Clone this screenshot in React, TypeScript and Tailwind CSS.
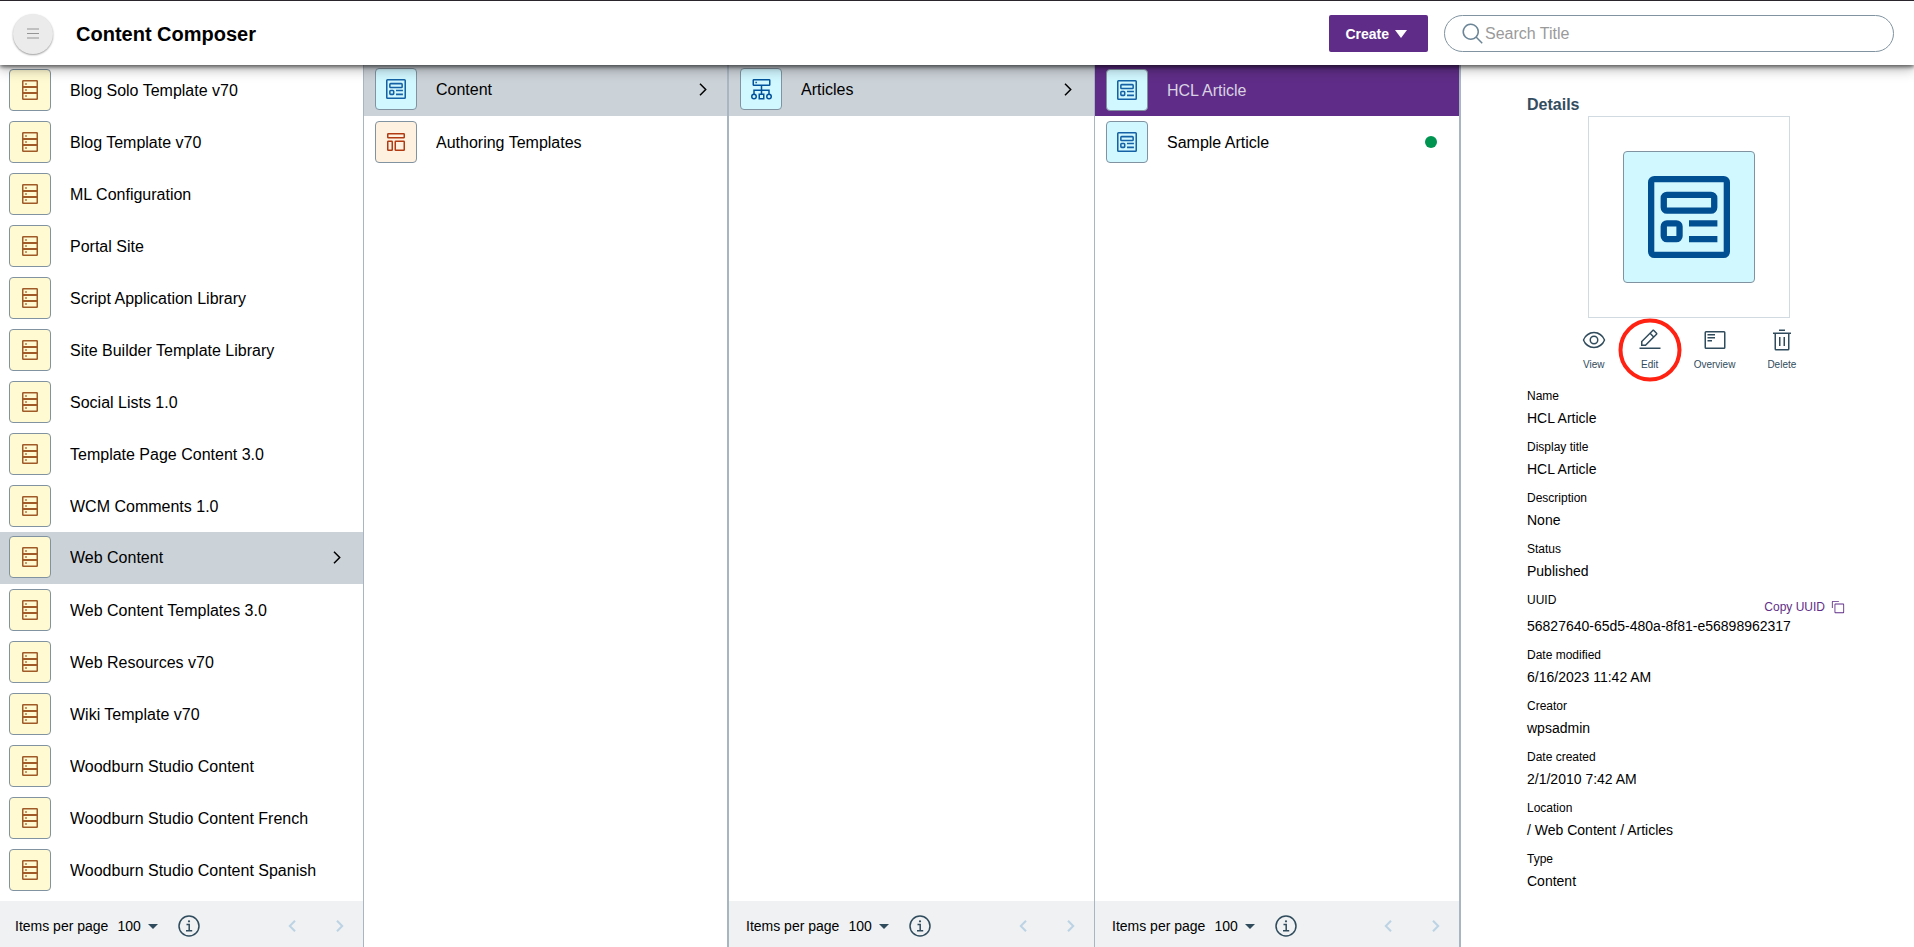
import React from "react";

type Kind = "library" | "content" | "template" | "sitearea";

type Item = {
  title: string;
  kind: Kind;
  state?: "open" | "active";
  published?: boolean;
};

const libraries: Item[] = [
  { title: "Blog Solo Template v70", kind: "library" },
  { title: "Blog Template v70", kind: "library" },
  { title: "ML Configuration", kind: "library" },
  { title: "Portal Site", kind: "library" },
  { title: "Script Application Library", kind: "library" },
  { title: "Site Builder Template Library", kind: "library" },
  { title: "Social Lists 1.0", kind: "library" },
  { title: "Template Page Content 3.0", kind: "library" },
  { title: "WCM Comments 1.0", kind: "library" },
  { title: "Web Content", kind: "library", state: "open" },
  { title: "Web Content Templates 3.0", kind: "library" },
  { title: "Web Resources v70", kind: "library" },
  { title: "Wiki Template v70", kind: "library" },
  { title: "Woodburn Studio Content", kind: "library" },
  { title: "Woodburn Studio Content French", kind: "library" },
  { title: "Woodburn Studio Content Spanish", kind: "library" },
];

const folders: Item[] = [
  { title: "Content", kind: "content", state: "open" },
  { title: "Authoring Templates", kind: "template" },
];

const siteAreas: Item[] = [{ title: "Articles", kind: "sitearea", state: "open" }];

const articles: Item[] = [
  { title: "HCL Article", kind: "content", state: "active" },
  { title: "Sample Article", kind: "content", published: true },
];

function LibraryIcon() {
  return (
    <svg width="16" height="20" viewBox="0 0 16 20" fill="none" stroke="currentColor" strokeWidth="1.5" aria-hidden="true">
      <rect x="0.75" y="0.75" width="14.5" height="18.5" rx="0.6" />
      <path d="M1 7H15M1 13H15" strokeWidth="2" />
      <path d="M3.2 4H4.8M3.2 10H4.8M3.2 16H4.8" />
    </svg>
  );
}

function ContentIcon({ className }: { className: string }) {
  return (
    <svg className={className} viewBox="0 0 26 26" fill="none" stroke="currentColor" strokeWidth="2" aria-hidden="true">
      <rect x="1" y="1" width="24" height="24" rx="1" />
      <rect x="5" y="6" width="16" height="5" rx="1" />
      <rect x="5" y="15" width="5" height="5" rx="1" />
      <path d="M13 15H22M13 20H22" />
    </svg>
  );
}

function TemplateIcon() {
  return (
    <svg width="18" height="18" viewBox="0 0 18 18" fill="none" stroke="currentColor" strokeWidth="1.5" aria-hidden="true">
      <rect x="0.75" y="0.75" width="16.5" height="4" rx="0.6" />
      <rect x="0.75" y="8.25" width="4.5" height="9" rx="0.6" />
      <rect x="8.25" y="8.25" width="9" height="9" rx="0.6" />
    </svg>
  );
}

function SiteAreaIcon() {
  return (
    <svg width="21" height="21" viewBox="0 0 21 21" fill="none" stroke="currentColor" strokeWidth="1.5" aria-hidden="true">
      <rect x="2.25" y="0.75" width="16.5" height="5.5" rx="0.6" />
      <path d="M4.4 3.5H5.9M10.5 6.5V15M3 15V11.2H18V15" />
      <circle cx="3" cy="17.5" r="2.25" />
      <circle cx="18" cy="17.5" r="2.25" />
      <rect x="8.25" y="15.25" width="4.5" height="4.5" />
    </svg>
  );
}

const tileColors: Record<Kind, string> = {
  library: "bg-[#fffad1] text-[#9f5a28]",
  content: "bg-[#d1f7ff] text-[#1462a5]",
  template: "bg-[#fff1df] text-[#b23a12]",
  sitearea: "bg-[#d1f7ff] text-[#00539b]",
};

function Tile({ kind }: { kind: Kind }) {
  return (
    <span className={`flex size-[42px] shrink-0 items-center justify-center rounded border border-[#8193a1] ${tileColors[kind]}`}>
      {kind === "library" && <LibraryIcon />}
      {kind === "content" && <ContentIcon className="size-5" />}
      {kind === "template" && <TemplateIcon />}
      {kind === "sitearea" && <SiteAreaIcon />}
    </span>
  );
}

function Row({ item, inset }: { item: Item; inset: string }) {
  const tone =
    item.state === "open"
      ? "bg-[#cbd2d8] pb-0.5 text-black"
      : item.state === "active"
        ? "bg-[#5f2d87] text-[#d9d3e3]"
        : "bg-white text-black";
  return (
    <li>
      <button type="button" className={`flex h-[52px] w-full items-center gap-[19px] text-left text-base ${inset} ${tone}`}>
        <Tile kind={item.kind} />
        <span className="flex-1 truncate pt-0.5">{item.title}</span>
        {item.state === "open" && (
          <svg width="8" height="13" viewBox="0 0 8 13" fill="none" stroke="currentColor" strokeWidth="1.5" aria-hidden="true">
            <path d="M1 0.8L6.7 6.5L1 12.2" />
          </svg>
        )}
        {item.published && <span className="size-3 rounded-full bg-[#009451]" />}
      </button>
    </li>
  );
}

function Pager({ id, inset }: { id: string; inset: string }) {
  return (
    <footer className={`flex h-[46px] shrink-0 items-center bg-[#eff1f3] pt-1 pr-[19px] text-sm leading-5 ${inset}`}>
      <label htmlFor={id}>Items per page</label>
      <span className="ml-[9px] flex items-center">
        <select id={id} className="w-[31px] appearance-none bg-transparent" defaultValue="100">
          <option>100</option>
        </select>
        <svg width="10" height="5" viewBox="0 0 10 5" fill="#2f4b5c" aria-hidden="true">
          <path d="M0 0H10L5 5Z" />
        </svg>
      </span>
      <button type="button" aria-label="Information" className="ml-5 text-[#2f4b5c]">
        <svg width="22" height="22" viewBox="0 0 22 22" fill="none" stroke="currentColor" strokeWidth="1.5" aria-hidden="true">
          <circle cx="11" cy="11" r="10" />
          <path d="M8.5 9.5H11.2V15.5M8 15.7H14.2" />
          <circle cx="11" cy="6.3" r="1.1" fill="currentColor" stroke="none" />
        </svg>
      </button>
      <div className="ml-auto flex gap-10 text-[#bcd3e4]">
        <button type="button" aria-label="Previous page">
          <svg width="8" height="12" viewBox="0 0 8 12" fill="none" stroke="currentColor" strokeWidth="2" aria-hidden="true">
            <path d="M7 0.8L1.8 6L7 11.2" />
          </svg>
        </button>
        <button type="button" aria-label="Next page">
          <svg width="8" height="12" viewBox="0 0 8 12" fill="none" stroke="currentColor" strokeWidth="2" aria-hidden="true">
            <path d="M1 0.8L6.2 6L1 11.2" />
          </svg>
        </button>
      </div>
    </footer>
  );
}

type ColumnProps = {
  items: Item[];
  className: string;
  inset: string;
  pager?: { id: string; inset: string };
};

function Column({ items, className, inset, pager }: ColumnProps) {
  return (
    <section className={`flex min-h-0 min-w-0 flex-col border-[#a8b6c2] ${className}`}>
      <ul className="min-h-0 flex-1 overflow-hidden">
        {items.map((item) => (
          <Row key={item.title} item={item} inset={inset} />
        ))}
      </ul>
      {pager && <Pager id={pager.id} inset={pager.inset} />}
    </section>
  );
}

function Action({ label, marked, children }: { label: string; marked?: boolean; children: React.ReactNode }) {
  return (
    <button type="button" className="relative flex min-w-6 flex-col items-center gap-[7px] text-[10px] leading-3 text-[#2f4b5c]">
      <svg width="24" height="24" viewBox="0 0 32 32" fill="currentColor" aria-hidden="true">
        {children}
      </svg>
      {label}
      {marked && (
        <span className="absolute top-1/2 left-1/2 size-[63px] -translate-1/2 rounded-full border-4 border-[#ff2213]" />
      )}
    </button>
  );
}

function Field({ label, value, action }: { label: string; value: string; action?: React.ReactNode }) {
  return (
    <div className="text-black">
      <dt className={`flex items-start justify-between text-xs leading-5 ${action ? "h-6" : ""}`}>
        {label}
        {action}
      </dt>
      <dd className="text-sm leading-6">{value}</dd>
    </div>
  );
}

function Details() {
  return (
    <aside className="min-w-0 pt-[30px] pr-[63px] pl-[66px]">
      <h2 className="text-base leading-[22px] font-bold text-[#334d5e]">Details</h2>
      <div className="mx-auto flex size-[202px] items-center justify-center border border-[#d1dae1]">
        <div className="flex size-[132px] items-center justify-center rounded border border-[#8193a1] bg-[#d1f7ff] text-[#004f93]">
          <ContentIcon className="size-[82px]" />
        </div>
      </div>
      <div className="mt-2.5 flex justify-center gap-8">
        <Action label="View">
          <path d="M30.94,15.66A16.69,16.69,0,0,0,16,5,16.69,16.69,0,0,0,1.06,15.66a1,1,0,0,0,0,.68A16.69,16.69,0,0,0,16,27,16.69,16.69,0,0,0,30.94,16.34,1,1,0,0,0,30.94,15.66ZM16,25c-5.3,0-10.9-3.93-12.93-9C5.1,10.93,10.7,7,16,7s10.9,3.93,12.93,9C26.9,21.07,21.3,25,16,25Z" />
          <path d="M16,10a6,6,0,1,0,6,6A6,6,0,0,0,16,10Zm0,10a4,4,0,1,1,4-4A4,4,0,0,1,16,20Z" />
        </Action>
        <Action label="Edit" marked>
          <path d="M2 26H30V28H2z" />
          <path d="M25.4,9c.8-.8.8-2,0-2.8L21.8,2.6c-.8-.8-2-.8-2.8,0l-15,15V24h6.4l15-15ZM20.4,4L24,7.6l-3,3L17.4,7l3-3ZM6,22V18.4l10-10L19.6,12l-10,10Z" />
        </Action>
        <Action label="Overview">
          <path d="M28,4H4A2,2,0,0,0,2,6V26a2,2,0,0,0,2,2H28a2,2,0,0,0,2-2V6A2,2,0,0,0,28,4ZM28,26H4V6H28Z" />
          <path d="M6 8H16V10H6zM6 12H16V14H6zM6 16H12V18H6z" />
        </Action>
        <Action label="Delete">
          <path d="M12 12H14V24H12zM18 12H20V24H18z" />
          <path d="M4,6V8H6V28a2,2,0,0,0,2,2H24a2,2,0,0,0,2-2V8h2V6ZM8,28V8H24V28Z" />
          <path d="M12 2H20V4H12z" />
        </Action>
      </div>
      <dl className="mt-[15px] flex flex-col gap-[7px]">
        <Field label="Name" value="HCL Article" />
        <Field label="Display title" value="HCL Article" />
        <Field label="Description" value="None" />
        <Field label="Status" value="Published" />
        <Field
          label="UUID"
          value="56827640-65d5-480a-8f81-e56898962317"
          action={
            <button type="button" className="mr-1.5 flex h-[34px] items-center gap-1.5 text-xs text-[#5f2d87]">
              Copy UUID
              <svg width="14" height="14" viewBox="0 0 32 32" fill="currentColor" aria-hidden="true">
                <path d="M28,10V28H10V10H28m0-2H10a2,2,0,0,0-2,2V28a2,2,0,0,0,2,2H28a2,2,0,0,0,2-2V10a2,2,0,0,0-2-2Z" />
                <path d="M4,18H2V4A2,2,0,0,1,4,2H18V4H4Z" />
              </svg>
            </button>
          }
        />
        <Field label="Date modified" value="6/16/2023 11:42 AM" />
        <Field label="Creator" value="wpsadmin" />
        <Field label="Date created" value="2/1/2010 7:42 AM" />
        <Field label="Location" value="/ Web Content / Articles" />
        <Field label="Type" value="Content" />
      </dl>
    </aside>
  );
}

export default function App() {
  return (
    <div className="flex h-screen flex-col overflow-hidden bg-white font-['Liberation_Sans',Arial,sans-serif] text-black">
      <header className="relative z-10 flex h-[65px] shrink-0 items-center border-t border-[#2a252c] bg-white pt-px pr-5 pl-[13px] shadow-[0_2px_4px_rgba(0,0,0,0.55),0_4px_12px_rgba(0,0,0,0.3)]">
        <button
          type="button"
          aria-label="Menu"
          className="flex size-10 items-center justify-center rounded-full bg-[#ebebeb] text-[#959595] shadow-[0_1px_2px_rgba(0,0,0,0.4)]"
        >
          <svg width="12" height="11" viewBox="0 0 12 11" stroke="currentColor" strokeWidth="1.2" aria-hidden="true">
            <path d="M0 1H12M0 5.5H12M0 10H12" />
          </svg>
        </button>
        <h1 className="ml-[23px] text-xl font-bold">Content Composer</h1>
        <button
          type="button"
          className="ml-auto flex h-[37px] items-center gap-1.5 rounded-xs bg-[#5f2d87] pr-[21px] pl-4 text-sm font-bold text-white"
        >
          Create
          <svg width="12" height="8" viewBox="0 0 12 8" fill="currentColor" aria-hidden="true">
            <path d="M0 0H12L6 8Z" />
          </svg>
        </button>
        <label className="ml-4 flex h-[37px] w-[450px] items-center rounded-full border border-[#8193a1] pl-4 text-[#6b8597]">
          <svg width="24" height="24" viewBox="0 0 32 32" fill="currentColor" aria-hidden="true">
            <path d="M29,27.5859l-7.5521-7.5521a11.0177,11.0177,0,1,0-1.4141,1.4141L27.5859,29ZM4,13a9,9,0,1,1,9,9A9.01,9.01,0,0,1,4,13Z" />
          </svg>
          <input
            type="text"
            aria-label="Search Title"
            placeholder="Search Title"
            className="min-w-0 flex-1 bg-transparent text-base text-black outline-none placeholder:text-[#9a9a9a]"
          />
        </label>
      </header>
      <main className="-mt-px grid min-h-0 flex-1 grid-cols-[364fr_365fr_366fr_366fr_453fr] grid-rows-[minmax(0,1fr)]">
        <Column items={libraries} className="border-r" inset="pl-[9px] pr-[22px]" pager={{ id: "libraries-per-page", inset: "pl-[15px]" }} />
        <Column items={folders} className="border-r-2" inset="pl-[11px] pr-5" />
        <Column items={siteAreas} className="border-r" inset="pl-[11px] pr-[22px]" pager={{ id: "areas-per-page", inset: "pl-[17px]" }} />
        <Column items={articles} className="border-r-2" inset="pl-[11px] pr-[22px]" pager={{ id: "articles-per-page", inset: "pl-[17px]" }} />
        <Details />
      </main>
    </div>
  );
}
